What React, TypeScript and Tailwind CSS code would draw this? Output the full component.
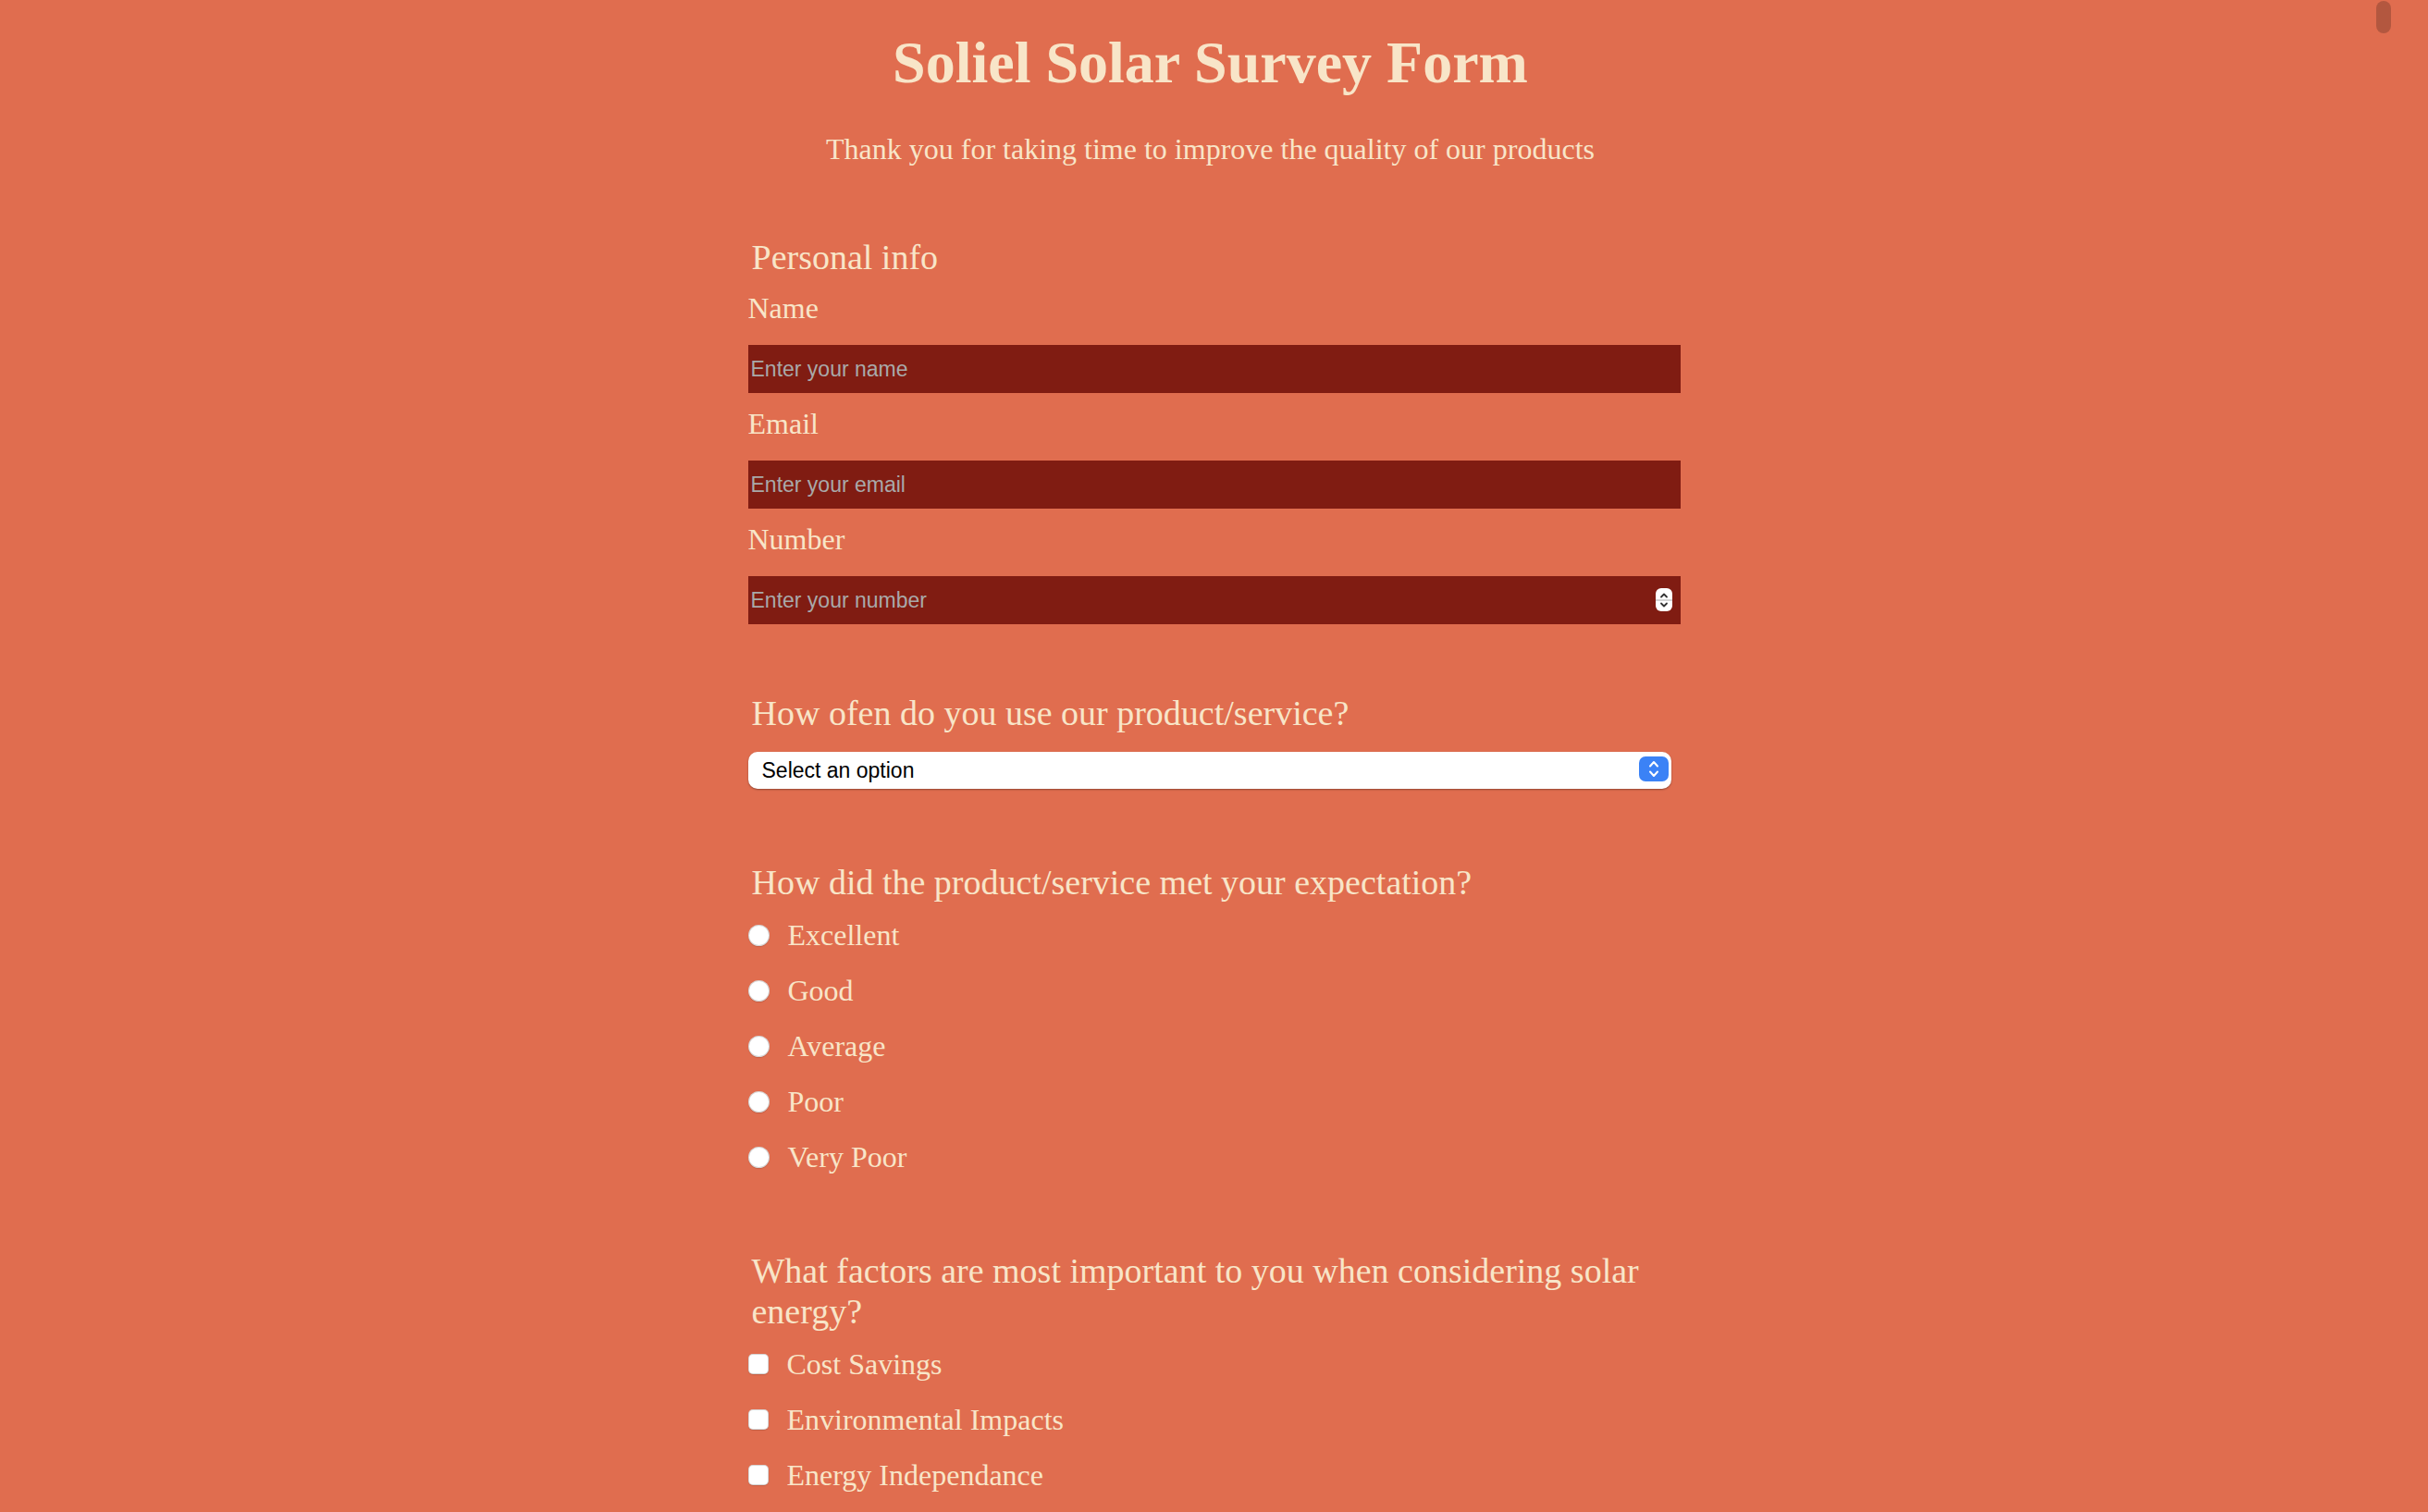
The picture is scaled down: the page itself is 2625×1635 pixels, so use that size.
import React from "react";

const serif = "font-['Liberation_Serif','Times_New_Roman',serif]";
const sans = "font-['Liberation_Sans',Arial,sans-serif]";

const ratings = ["Excellent", "Good", "Average", "Poor", "Very Poor"];
const factors = ["Cost Savings", "Environmental Impacts", "Energy Independance"];

function Heading({ children, className = "" }: { children: React.ReactNode; className?: string }) {
  return <h2 className={`pl-[4px] text-[38px] leading-[44px] font-normal ${className}`}>{children}</h2>;
}

function Field({ label, placeholder, spinner }: { label: string; placeholder: string; spinner?: boolean }) {
  return (
    <>
      <label className="block mt-[15px] text-[32px] leading-[36px]">{label}</label>
      <div className="relative mt-[22px]">
        <input
          type="text"
          placeholder={placeholder}
          className={`${sans} block w-full h-[52px] bg-[#801c12] pl-[3px] text-[23px] text-[#f8e5c8] placeholder:text-[#a9a9a9] outline-none border-0`}
        />
        {spinner && (
          // stepper drawn over the right end of the field
          <div className="absolute right-[9px] top-[13px] w-[18px] h-[25px] rounded-[6px] bg-white flex flex-col items-center justify-center">
            <svg width="10" height="7" viewBox="0 0 10 7" className="mb-[1px]">
              <path d="M2 5.5 L5 2.5 L8 5.5" fill="none" stroke="#333" strokeWidth="1.8" strokeLinecap="round" strokeLinejoin="round" />
            </svg>
            <div className="w-full h-[2px] bg-[#d4d4d4]" />
            <svg width="10" height="7" viewBox="0 0 10 7" className="mt-[1px]">
              <path d="M2 1.5 L5 4.5 L8 1.5" fill="none" stroke="#333" strokeWidth="1.8" strokeLinecap="round" strokeLinejoin="round" />
            </svg>
          </div>
        )}
      </div>
    </>
  );
}

export default function App() {
  return (
    <div className={`${serif} relative w-full h-[1635px] overflow-hidden bg-[#e06d4f] text-[#f8e5c8] pt-[31px]`}>
      {/* Header */}
      <header className="pr-[8px] text-center">
        <h1 className="text-[64px] leading-[74px] font-bold">Soliel Solar Survey Form</h1>
        <p className="mt-[38px] text-[32px] leading-[36px]">Thank you for taking time to improve the quality of our products</p>
      </header>

      <form className="w-[1008px] mx-auto">
        {/* Personal info */}
        <fieldset className="mt-[77px]">
          <Heading>Personal info</Heading>
          <Field label="Name" placeholder="Enter your name" />
          <Field label="Email" placeholder="Enter your email" />
          <Field label="Number" placeholder="Enter your number" spinner />
        </fieldset>

        {/* Usage */}
        <Heading className="mt-[74px]">How ofen do you use our product/service?</Heading>
        <div className="relative mt-[20px] w-[998px] h-[40px]">
          <select
            className={`${sans} appearance-none block w-full h-full rounded-[10px] bg-white pl-[15px] text-[23px] text-black outline-none shadow-[0_1px_2px_rgba(0,0,0,0.35)]`}
            defaultValue=""
          >
            <option value="">Select an option</option>
            <option>Daily</option>
            <option>Weekly</option>
            <option>Monthly</option>
          </select>
          <div className="pointer-events-none absolute right-[3px] top-[5px] w-[32px] h-[27px] rounded-[7px] bg-[#3b82f6] flex flex-col items-center justify-center gap-[3px]">
            <svg width="14" height="8" viewBox="0 0 14 8">
              <path d="M3 6.5 L7 2 L11 6.5" fill="none" stroke="white" strokeWidth="2" strokeLinecap="round" strokeLinejoin="round" />
            </svg>
            <svg width="14" height="8" viewBox="0 0 14 8">
              <path d="M3 1.5 L7 6 L11 1.5" fill="none" stroke="white" strokeWidth="2" strokeLinecap="round" strokeLinejoin="round" />
            </svg>
          </div>
        </div>

        {/* Expectation */}
        <Heading className="mt-[79px]">How did the product/service met your expectation?</Heading>
        <div className="mt-[5px]">
          {ratings.map((r) => (
            <label key={r} className="flex items-center h-[60px]">
              <input
                type="radio"
                name="rating"
                className="appearance-none w-[23px] h-[23px] rounded-full bg-white shadow-[inset_0_0_0_1px_rgba(0,0,0,0.16),0_1px_1px_rgba(0,0,0,0.12)]"
              />
              <span className="ml-[20px] text-[32px] leading-[36px]">{r}</span>
            </label>
          ))}
        </div>

        {/* Factors */}
        <Heading className="mt-[71px]">What factors are most important to you when considering solar energy?</Heading>
        <div className="mt-[5px]">
          {factors.map((f) => (
            <label key={f} className="flex items-center h-[60px]">
              <input
                type="checkbox"
                className="appearance-none w-[22px] h-[22px] rounded-[5px] bg-white shadow-[inset_0_0_0_1px_rgba(0,0,0,0.16),0_1px_1px_rgba(0,0,0,0.12)]"
              />
              <span className="ml-[20px] text-[32px] leading-[36px]">{f}</span>
            </label>
          ))}
        </div>
      </form>

      {/* overlay scrollbar thumb */}
      <div className="absolute left-[2569px] top-[1px] w-[16px] h-[35px] rounded-full bg-black/20" />
    </div>
  );
}
